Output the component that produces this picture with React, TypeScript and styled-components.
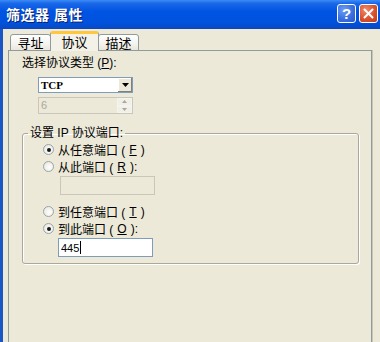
import React from 'react';
import styled, {createGlobalStyle} from "styled-components";

const GlobalStyle = createGlobalStyle`
    html, body {
        margin: 0;
        padding: 0;
        background: #ece9d8;
    }
    * {
        box-sizing: border-box;
    }
`

const FONT = `"Liberation Sans", "Noto Sans CJK SC", sans-serif`;

export default function App() {
    return (
        <>
            <GlobalStyle/>
            <Window>
                <TitleBar>
                    <Title>筛选器 属性</Title>
                    <TitleButtons>
                        <TitleButton kind="help">?</TitleButton>
                        <TitleButton kind="close">
                            <svg width="11" height="11" viewBox="0 0 11 11">
                                <path d="M1.5 1.5 L9.5 9.5 M9.5 1.5 L1.5 9.5" stroke="#fff" strokeWidth="2"
                                      strokeLinecap="round"/>
                            </svg>
                        </TitleButton>
                    </TitleButtons>
                </TitleBar>
                <Body>
                    <TabStrip>
                        <Tab>寻址</Tab>
                        <Tab active>协议</Tab>
                        <Tab>描述</Tab>
                    </TabStrip>
                    <Panel>
                        <FieldLabel>选择协议类型 (<u>P</u>):</FieldLabel>
                        <Combo>
                            <ComboValue>TCP</ComboValue>
                            <DropButton>
                                <svg width="7" height="4" viewBox="0 0 7 4">
                                    <path d="M0 0 H7 L3.5 4 Z" fill="#000"/>
                                </svg>
                            </DropButton>
                        </Combo>
                        <Spin>
                            <SpinValue>6</SpinValue>
                            <SpinButtons>
                                <SpinArrow>
                                    <svg width="5" height="3" viewBox="0 0 5 3">
                                        <path d="M0 3 H5 L2.5 0 Z" fill="#aca899"/>
                                    </svg>
                                </SpinArrow>
                                <SpinArrow>
                                    <svg width="5" height="3" viewBox="0 0 5 3">
                                        <path d="M0 0 H5 L2.5 3 Z" fill="#aca899"/>
                                    </svg>
                                </SpinArrow>
                            </SpinButtons>
                        </Spin>
                        <Group>
                            <Legend>设置 IP 协议端口:</Legend>
                            <RadioRow><Radio checked/>从任意端口 (<u>F</u>)</RadioRow>
                            <RadioRow><Radio/>从此端口 (<u>R</u>):</RadioRow>
                            <TextBox disabled indent={37}/>
                            <RadioRow gapTop={8}><Radio/>到任意端口 (<u>T</u>)</RadioRow>
                            <RadioRow><Radio checked/>到此端口 (<u>O</u>):</RadioRow>
                            <TextBox indent={35}>445<Caret/></TextBox>
                        </Group>
                    </Panel>
                </Body>
            </Window>
        </>
    );
}

const Window = styled.div`
    width: 380px;
    height: 342px;
    display: flex;
    flex-direction: column;
    overflow: hidden;
    font-family: ${FONT};
    font-size: 12px;
    color: #000;
`
const TitleBar = styled.div`
    height: 29px;
    flex: none;
    display: flex;
    align-items: center;
    justify-content: space-between;
    padding: 0 2px 2px 6px;
    background: linear-gradient(180deg, #3b8cf5 0%, #1a68e8 12%, #0054e3 40%, #0052dc 80%, #0a47c0 100%);
`
const Title = styled.span`
    color: #fff;
    font-weight: bold;
    font-size: 14px;
    letter-spacing: 0.5px;
    text-shadow: 1px 1px 0 #0a1f6c;
`
const TitleButtons = styled.div`
    display: flex;
    gap: 3px;
`
const TitleButton = styled.div<{ kind: 'help' | 'close' }>`
    width: 19px;
    height: 19px;
    border: 1px solid #fff;
    border-radius: 3px;
    display: flex;
    align-items: center;
    justify-content: center;
    color: #fff;
    font-family: "Liberation Sans", sans-serif;
    font-weight: bold;
    font-size: 15px;
    background: ${p => p.kind === 'close'
            ? 'radial-gradient(circle at 35% 30%, #f08a6a 0%, #d9522e 55%, #c23a18 100%)'
            : 'radial-gradient(circle at 35% 30%, #6f9ff3 0%, #3a70e0 55%, #2a56c8 100%)'};
`
const Body = styled.div`
    flex: 1;
    display: flex;
    flex-direction: column;
    padding: 3px 8px 0 5px;
    border-left: 3px solid #1c55c6;
    background: #ece9d8;
    min-height: 0;
`
const TabStrip = styled.div`
    display: flex;
    align-items: flex-end;
    padding-left: 2px;
    height: 19px;
    position: relative;
    z-index: 1;
    margin-bottom: -1px;
`
const Tab = styled.div<{ active?: boolean }>`
    height: ${p => p.active ? 20 : 17}px;
    width: ${p => p.active ? 49 : 41}px;
    margin: 0 ${p => p.active ? -1 : 0}px;
    display: flex;
    align-items: center;
    justify-content: center;
    font-size: 13px;
    border: 1px solid #919b9c;
    border-bottom: ${p => p.active ? 'none' : '1px solid #919b9c'};
    border-top: ${p => p.active ? '3px solid #ffc83c' : '1px solid #919b9c'};
    border-radius: 3px 3px 0 0;
    background: ${p => p.active ? '#f4f2e8' : 'linear-gradient(180deg, #fff 0%, #f4f3ee 60%, #e8e6dd 100%)'};
    position: relative;
    z-index: ${p => p.active ? 2 : 1};
    padding-bottom: ${p => p.active ? 2 : 0}px;
`
const Panel = styled.div`
    flex: 1;
    display: flex;
    flex-direction: column;
    align-items: flex-start;
    border: 1px solid #919b9c;
    border-bottom: none;
    box-shadow: 1px 0 0 #c8c5b6;
    background: #ece9d8;
    padding: 5px 12px 0 13px;
`
const FieldLabel = styled.div`
    line-height: 14px;
    height: 14px;
`
const Combo = styled.div`
    margin: 7px 0 0 16px;
    width: 95px;
    height: 16px;
    border: 1px solid #7f9db9;
    background: #fff;
    display: flex;
    align-items: stretch;
`
const ComboValue = styled.span`
    flex: 1;
    padding-left: 2px;
    line-height: 14px;
    font-family: "Liberation Serif", "Noto Sans CJK SC", serif;
    font-weight: bold;
    font-size: 11px;
`
const DropButton = styled.span`
    width: 15px;
    display: flex;
    align-items: center;
    justify-content: center;
    background: #ece9d8;
    border-left: 1px solid #fff;
    box-shadow: inset -1px -1px 0 #808080, inset 1px 1px 0 #fff;
`
const Spin = styled.div`
    margin: 4px 0 0 16px;
    width: 95px;
    height: 17px;
    border: 1px solid #c9c7ba;
    background: #ece9d8;
    display: flex;
`
const SpinValue = styled.span`
    flex: 1;
    padding-left: 2px;
    line-height: 15px;
    color: #aca899;
    font-size: 11px;
`
const SpinButtons = styled.span`
    width: 15px;
    display: flex;
    flex-direction: column;
`
const SpinArrow = styled.span`
    flex: 1;
    display: flex;
    align-items: center;
    justify-content: center;
    border: 1px solid #f4f3ee;
    background: #f0efe8;
`
const Group = styled.fieldset`
    margin: 12px 0 0 0;
    align-self: stretch;
    border: 1px solid #aca899;
    border-radius: 3px;
    box-shadow: inset 1px 1px 0 #fff, 1px 1px 0 #fff;
    padding: 1px 0 6px 20px;
    display: flex;
    flex-direction: column;
    align-items: flex-start;
`
const Legend = styled.legend`
    padding: 0 2px;
    margin-left: -15px;
    line-height: 14px;
`
const RadioRow = styled.div<{ gapTop?: number }>`
    display: flex;
    align-items: center;
    gap: 4px;
    height: 17px;
    margin-top: ${p => p.gapTop ?? 0}px;
`
const Radio = styled.span<{ checked?: boolean }>`
    width: 11px;
    height: 11px;
    border-radius: 50%;
    border: 1px solid #9aa4a8;
    background: radial-gradient(circle at 60% 60%, #fff 0%, #ecebe4 70%, #d6d4c8 100%);
    position: relative;
    flex: none;

    &::after {
        content: "";
        display: ${p => p.checked ? 'block' : 'none'};
        position: absolute;
        left: 2.5px;
        top: 2.5px;
        width: 4px;
        height: 4px;
        border-radius: 50%;
        background: #1a1a1a;
    }
`
const TextBox = styled.div<{ disabled?: boolean; indent: number }>`
    margin: 1px 0 0 ${p => p.indent - 20}px;
    width: 95px;
    height: 19px;
    border: 1px solid ${p => p.disabled ? '#c9c7ba' : '#7f9db9'};
    background: ${p => p.disabled ? '#ece9d8' : '#fff'};
    padding-left: 2px;
    display: flex;
    align-items: center;
    font-size: 11px;
`
const Caret = styled.span`
    width: 1px;
    height: 13px;
    background: #000;
    margin-left: 1px;
`
